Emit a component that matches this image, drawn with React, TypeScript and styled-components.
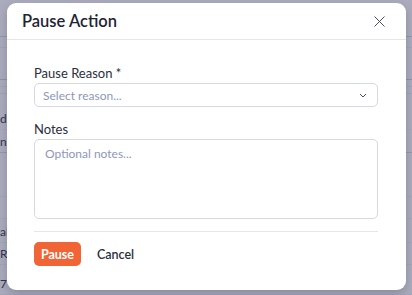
import React from "react";
import styled, { createGlobalStyle } from "styled-components";

const Global = createGlobalStyle`
  html, body { margin: 0; padding: 0; }
  body { font-family: Lato, "Noto Sans", sans-serif; -webkit-font-smoothing: antialiased; }
  * { box-sizing: border-box; }
`;

const Page = styled.div`
  position: relative;
  width: 412px;
  height: 295px;
  overflow: hidden;
  background: #aaacbd;
`;

const BgList = styled.div`
  display: flex;
  flex-direction: column;
`;

const BgRow = styled.div<{ $h: number; $line: string }>`
  height: ${(p) => p.$h}px;
  border-bottom: 1px solid ${(p) => p.$line};
  display: flex;
  align-items: flex-end;
  padding-bottom: 3px;
  font-size: 12px;
  color: #2f3350;
  white-space: nowrap;
`;

const Modal = styled.div`
  position: absolute;
  left: 7px;
  top: 3px;
  width: 399px;
  height: 287px;
  background: #fff;
  border-radius: 9px;
  box-shadow: 0 4px 10px rgba(40, 44, 70, 0.25);
  display: flex;
  flex-direction: column;
`;

const Header = styled.div`
  height: 37px;
  border-bottom: 1px solid #e4e6ee;
  display: flex;
  align-items: center;
  justify-content: space-between;
  padding: 0 21px 0 15px;
`;

const Title = styled.h2`
  margin: 0;
  font-size: 16.5px;
  font-weight: 600;
  color: #1f2433;
`;

const Close = styled.button`
  border: 0;
  background: none;
  padding: 0;
  width: 11px;
  height: 11px;
  display: flex;
  color: #4a4f60;
`;

const Body = styled.div`
  padding: 25px 28px 0 27px;
  display: flex;
  flex-direction: column;
`;

const Label = styled.label`
  font-size: 13px;
  color: #2a2e3d;
  line-height: 16px;
  margin-bottom: 2px;
`;

const Field = styled.div<{ $h: number; $tall?: boolean }>`
  height: ${(p) => p.$h}px;
  border: 1px solid #d6d9e4;
  border-radius: 5px;
  padding: ${(p) => (p.$tall ? "6px 10px 0" : "0 10px 0 8px")};
  font-size: 12px;
  color: #8d97ba;
  display: flex;
  align-items: ${(p) => (p.$tall ? "flex-start" : "center")};
  justify-content: space-between;
  margin-bottom: ${(p) => (p.$tall ? 12 : 14)}px;
`;

const Divider = styled.div`
  height: 1px;
  background: #e4e6ee;
`;

const Footer = styled.div`
  display: flex;
  align-items: center;
  gap: 16px;
  padding-top: 10px;
`;

const PrimaryButton = styled.button`
  height: 24px;
  width: 47px;
  border: 0;
  border-radius: 5px;
  background: #f16436;
  color: #fff;
  font-family: inherit;
  font-weight: 700;
  font-size: 12.5px;
  padding: 0;
`;

const TextButton = styled.button`
  border: 0;
  background: none;
  padding: 0;
  font-family: inherit;
  font-size: 12.5px;
  font-weight: 600;
  color: #2a2e3d;
`;

const bgRows: { h: number; line: string; t?: string }[] = [
  { h: 37, line: "#9497ad" },
  { h: 11, line: "#a2a5b8" },
  { h: 32, line: "#8f92ac" },
  { h: 7, line: "#a0a3b7" },
  { h: 7, line: "#a0a3b7" },
  { h: 36, line: "#a5a7ba", t: "d" },
  { h: 23, line: "#9497ad", t: "n" },
  { h: 44, line: "#a3a6b9" },
  { h: 22, line: "#a3a6b9" },
  { h: 24, line: "#a3a6b9", t: "al" },
  { h: 22, line: "#a3a6b9", t: "Re" },
  { h: 30, line: "#a3a6b9", t: "7" },
];

export default function App() {
  return (
    <Page>
      <Global />
      <BgList>
        {bgRows.map((r, i) => (
          <BgRow key={i} $h={r.h} $line={r.line}>
            {r.t ?? ""}
          </BgRow>
        ))}
      </BgList>
      <Modal>
        <Header>
          <Title>Pause Action</Title>
          <Close aria-label="Close">
            <svg width="11" height="11" viewBox="0 0 11 11">
              <path d="M0.5 0.5L10.5 10.5M10.5 0.5L0.5 10.5" stroke="currentColor" strokeWidth="1" />
            </svg>
          </Close>
        </Header>
        <Body>
          <Label>Pause Reason *</Label>
          <Field $h={24}>
            <span>Select reason...</span>
            <svg width="8" height="5" viewBox="0 0 8 5">
              <path d="M1 1L4 4L7 1" stroke="#4a4f60" strokeWidth="1" fill="none" />
            </svg>
          </Field>
          <Label>Notes</Label>
          <Field $h={80} $tall>Optional notes...</Field>
          <Divider />
          <Footer>
            <PrimaryButton>Pause</PrimaryButton>
            <TextButton>Cancel</TextButton>
          </Footer>
        </Body>
      </Modal>
    </Page>
  );
}
